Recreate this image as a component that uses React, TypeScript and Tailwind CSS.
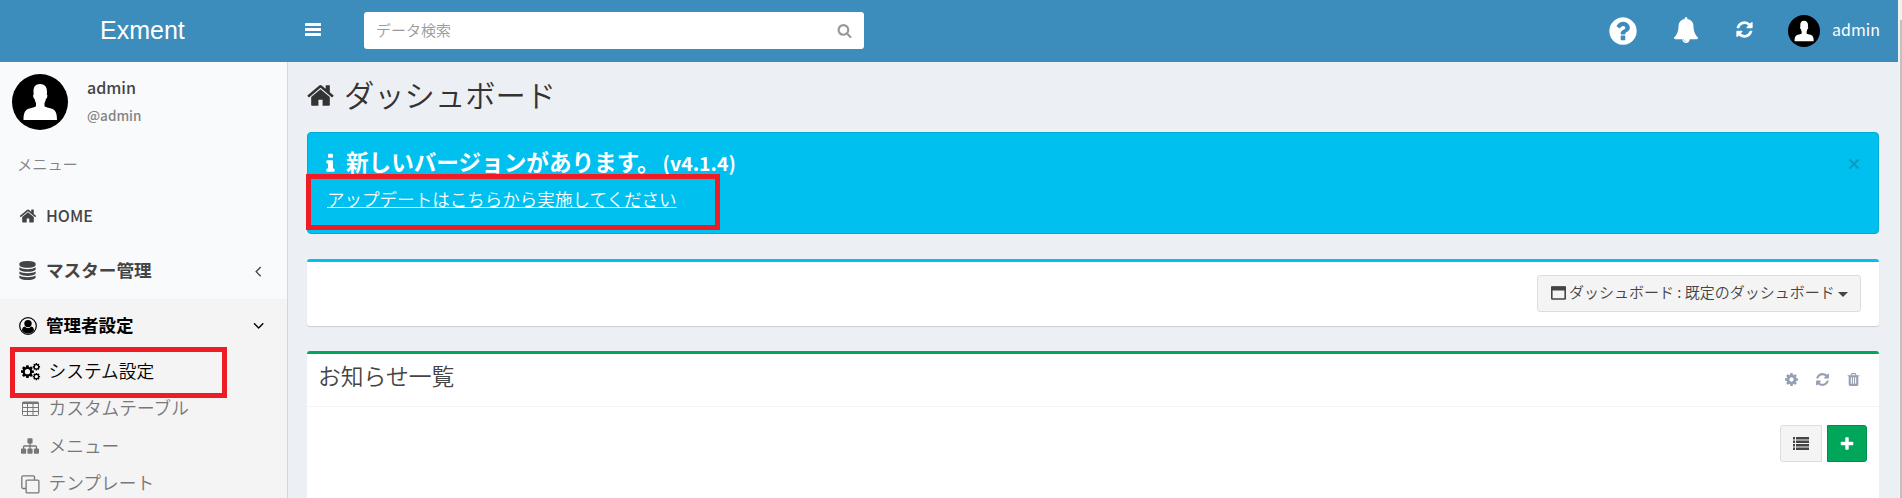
import React from "react";

const P = {
  home: "M1472 992v480q0 26-19 45t-45 19h-384v-384h-256v384h-384q-26 0-45-19t-19-45v-480q0-1 .5-3t.5-3l575-474 575 474q1 2 1 6zm223-69l-62 74q-8 9-21 11h-3q-13 0-21-7l-692-577-692 577q-12 8-24 7-13-2-21-11l-62-74q-8-10-7-23.5t11-21.5l719-599q32-26 76-26t76 26l244 204v-195q0-14 9-23t23-9h192q14 0 23 9t9 23v408l219 182q10 8 11 21.5t-7 23.5z",
  bell: "M912 1696q0-16-16-16-59 0-101.5-42.5t-42.5-101.5q0-16-16-16t-16 16q0 73 51.5 124.5t124.5 51.5q16 0 16-16zm816-288q0 52-38 90t-90 38h-448q0 106-75 181t-181 75-181-75-75-181h-448q-52 0-90-38t-38-90q50-42 91-88t85-119.5 74.5-158.5 50-206 19.5-260q0-152 117-282.5t307-158.5q-8-19-8-39 0-40 28-68t68-28 68 28 28 68q0 20-8 39 190 28 307 158.5t117 282.5q0 139 19.5 260t50 206 74.5 158.5 85 119.5 91 88z",
  question: "M1024 1376v-192q0-14-9-23t-23-9h-192q-14 0-23 9t-9 23v192q0 14 9 23t23 9h192q14 0 23-9t9-23zm256-672q0-88-55.5-163t-138.5-116-170-41q-243 0-371 213-15 24 8 42l132 100q7 6 19 6 16 0 25-12 53-68 86-92 34-24 86-24 48 0 85.5 26t37.5 59q0 38-20 61t-68 45q-63 28-115.5 86.5t-52.5 125.5v36q0 14 9 23t23 9h192q14 0 23-9t9-23q0-19 21.5-49.5t54.5-49.5q32-18 49-28.5t46-35 44.5-48 28-60.5 12.5-81zm384 192q0 209-103 385.5t-279.5 279.5-385.5 103-385.5-103-279.5-279.5-103-385.5 103-385.5 279.5-279.5 385.5-103 385.5 103 279.5 279.5 103 385.5z",
  refresh: "M1639 1056q0 5-1 7-64 268-268 434.5t-478 166.5q-146 0-282.5-55t-243.5-157l-129 129q-19 19-45 19t-45-19-19-45v-448q0-26 19-45t45-19h448q26 0 45 19t19 45-19 45l-137 137q71 66 161 102t187 36q134 0 250-65t186-179q11-17 53-117 8-23 30-23h192q13 0 22.5 9.5t9.5 22.5zm25-800v448q0 26-19 45t-45 19h-448q-26 0-45-19t-19-45 19-45l138-138q-148-137-349-137-134 0-250 65t-186 179q-11 17-53 117-8 23-30 23h-199q-13 0-22.5-9.5t-9.5-22.5v-7q65-268 270-434.5t480-166.5q146 0 284 55.5t245 156.5l130-129q19-19 45-19t45 19 19 45z",
  search: "M1216 832q0-185-131.5-316.5t-316.5-131.5-316.5 131.5-131.5 316.5 131.5 316.5 316.5 131.5 316.5-131.5 131.5-316.5zm512 832q0 52-38 90t-90 38q-54 0-90-38l-343-342q-179 124-399 124-143 0-273.5-55.5t-225-150-150-225-55.5-273.5 55.5-273.5 150-225 225-150 273.5-55.5 273.5 55.5 225 150 150 225 55.5 273.5q0 220-124 399l343 343q37 37 37 90z",
  cog: "M1152 896q0-106-75-181t-181-75-181 75-75 181 75 181 181 75 181-75 75-181zm512-109v222q0 12-8 23t-20 13l-185 28q-19 54-39 91 35 50 107 138 10 12 10 25t-9 23q-27 37-99 108t-94 71q-12 0-26-9l-138-108q-44 23-91 38-16 136-29 186-7 28-36 28h-222q-14 0-24.5-8.5t-11.5-21.5l-28-184q-49-16-90-37l-141 107q-10 9-25 9-14 0-25-11-126-114-165-168-7-10-7-23 0-12 8-23 15-21 51-66.5t54-70.5q-27-50-41-99l-183-27q-13-2-21-12.5t-8-23.5v-222q0-12 8-23t19-13l186-28q14-46 39-92-40-57-107-138-10-12-10-24 0-10 9-23 26-36 98.5-107.5t94.5-71.5q13 0 26 10l138 107q44-23 91-38 16-136 29-186 7-28 36-28h222q14 0 24.5 8.5t11.5 21.5l28 184q49 16 90 37l142-107q9-9 24-9 13 0 25 10 129 119 165 170 7 8 7 22 0 12-8 23-15 21-51 66.5t-54 70.5q26 50 41 98l183 28q13 2 21 12.5t8 23.5z",
  trash: "M704 1376v-704q0-14-9-23t-23-9h-64q-14 0-23 9t-9 23v704q0 14 9 23t23 9h64q14 0 23-9t9-23zm256 0v-704q0-14-9-23t-23-9h-64q-14 0-23 9t-9 23v704q0 14 9 23t23 9h64q14 0 23-9t9-23zm256 0v-704q0-14-9-23t-23-9h-64q-14 0-23 9t-9 23v704q0 14 9 23t23 9h64q14 0 23-9t9-23zm-544-992h448l-48-117q-7-9-17-11h-317q-10 2-17 11zm928 32v64q0 14-9 23t-23 9h-96v948q0 83-47 143.5t-113 60.5h-832q-66 0-113-58.5t-47-141.5v-952h-96q-14 0-23-9t-9-23v-64q0-14 9-23t23-9h309l70-167q15-37 54-63t79-26h320q40 0 79 26t54 63l70 167h309q14 0 23 9t9 23z",
  plus: "M1600 736v192q0 40-28 68t-68 28h-416v416q0 40-28 68t-68 28h-192q-40 0-68-28t-28-68v-416h-416q-40 0-68-28t-28-68v-192q0-40 28-68t68-28h416v-416q0-40 28-68t68-28h192q40 0 68 28t28 68v416h416q40 0 68 28t28 68z",
  database: "M896 768q237 0 443-43t325-127v170q0 69-103 128t-280 93.5-385 34.5-385-34.5-280-93.5-103-128v-170q119 84 325 127t443 43zm0 768q237 0 443-43t325-127v170q0 69-103 128t-280 93.5-385 34.5-385-34.5-280-93.5-103-128v-170q119 84 325 127t443 43zm0-384q237 0 443-43t325-127v170q0 69-103 128t-280 93.5-385 34.5-385-34.5-280-93.5-103-128v-170q119 84 325 127t443 43zm0-1152q208 0 385 34.5t280 93.5 103 128v128q0 69-103 128t-280 93.5-385 34.5-385-34.5-280-93.5-103-128v-128q0-69 103-128t280-93.5 385-34.5z",
  sitemap: "M1792 1248v320q0 40-28 68t-68 28h-320q-40 0-68-28t-28-68v-320q0-40 28-68t68-28h96v-192h-512v192h96q40 0 68 28t28 68v320q0 40-28 68t-68 28h-320q-40 0-68-28t-28-68v-320q0-40 28-68t68-28h96v-192h-512v192h96q40 0 68 28t28 68v320q0 40-28 68t-68 28h-320q-40 0-68-28t-28-68v-320q0-40 28-68t68-28h96v-192q0-52 38-90t90-38h512v-192h-96q-40 0-68-28t-28-68v-320q0-40 28-68t68-28h320q40 0 68 28t28 68v320q0 40-28 68t-68 28h-96v192h512q52 0 90 38t38 90v192h96q40 0 68 28t28 68z",
  info: "M1216 1344v128q0 26-19 45t-45 19h-512q-26 0-45-19t-19-45v-128q0-26 19-45t45-19h64v-384h-64q-26 0-45-19t-19-45v-128q0-26 19-45t45-19h384q26 0 45 19t19 45v576h64q26 0 45 19t19 45zm-128-1152v192q0 26-19 45t-45 19h-256q-26 0-45-19t-19-45v-192q0-26 19-45t45-19h256q26 0 45 19t19 45z",
  angle: "M1203 544q0 13-10 23l-393 393 393 393q10 10 10 23t-10 23l-50 50q-10 10-23 10t-23-10l-466-466q-10-10-10-23t10-23l466-466q10-10 23-10t23 10l50 50q10 10 10 23z",
};

function Fa({ d, className }: { d: string; className: string }) {
  return (
    <svg viewBox="0 0 1792 1792" fill="currentColor" className={"block shrink-0 " + className}>
      <path d={d} />
    </svg>
  );
}

function Avatar({ className }: { className: string }) {
  return (
    <svg viewBox="0 0 56 56" className={"block shrink-0 " + className}>
      <circle cx="28" cy="28" r="28" fill="#000" />
      <path
        fill="#fff"
        d="M28 10c4.600 0 7 2.800 7 7.500 0 1.200-.1 2.400-.2 3 .8.300.7 1.600.3 2.700-.3 1-.8 1.500-1.200 1.700-.3 1.700-.9 3.200-1.400 4.200v3.100c1.600 1.100 4 1.500 6.600 2.300 4.300 1.400 5.900 4 5.900 11.500H11.500c0-7.500 1.600-10.100 5.900-11.500 2.600-.8 5-1.200 6.600-2.300v-3.100c-.5-1-1.100-2.500-1.400-4.200-.4-.2-.9-.7-1.200-1.700-.4-1.100-.5-2.400.3-2.700-.1-.6-.2-1.800-.2-3C21.500 12.800 23.400 10 28 10z"
      />
    </svg>
  );
}

function MenuRow({ icon, label, dark }: { icon: React.ReactNode; label: string; dark?: boolean }) {
  return (
    <li className={"flex h-[37.500px] items-center pl-[21px] " + (dark ? "text-black" : "text-[#777]")}>
      <span className="flex w-[27.500px] shrink-0">{icon}</span>
      <span className="pb-[2px] text-[17.700px] font-[350] leading-none whitespace-nowrap">{label}</span>
    </li>
  );
}

export default function App() {
  return (
    <div className="relative flex h-[498px] w-[1902px] overflow-hidden bg-[#ecf0f5] font-['Noto_Sans_CJK_JP','Noto_Sans',sans-serif]">
      <div className="flex w-[1898px] flex-col">
        <header className="flex h-[62px] shrink-0 items-center bg-[#3c8dbc] text-white">
          <div className="w-[287px] shrink-0 pb-[1px] pl-[100px] font-['Liberation_Sans',Arial,sans-serif] text-[25px] leading-none">
            Exment
          </div>
          <svg viewBox="0 0 16 13" className="mb-[3px] ml-[18px] block h-[13px] w-[16px]" fill="currentColor">
            <rect width="16" height="3" rx=".6" />
            <rect y="5" width="16" height="3" rx=".6" />
            <rect y="10" width="16" height="3" rx=".6" />
          </svg>
          <div className="mb-[1px] ml-[43px] flex h-[37px] w-[500px] shrink-0 items-center justify-between rounded-[3px] bg-white pr-[12px] pl-[12px] text-[#999]">
            <span className="pb-[2px] text-[15px] leading-none font-[350]">データ検索</span>
            <Fa d={P.search} className="mb-[1px] h-[15px] w-[15px]" />
          </div>
          <div className="ml-auto flex items-center pr-[18px]">
            <Fa d={P.question} className="h-[32px] w-[32px]" />
            <Fa d={P.bell} className="mb-[2px] ml-[34px] h-[26px] w-[26px]" />
            <Fa d={P.refresh} className="mb-[3px] ml-[36px] h-[19px] w-[19px]" />
            <Avatar className="ml-[34px] h-[32px] w-[32px]" />
            <span className="ml-[12px] pb-[4px] text-[16px] leading-none">admin</span>
          </div>
        </header>

        <div className="flex min-h-0 flex-1">
          <aside className="flex w-[288px] shrink-0 flex-col border-r border-[#d2d6de] bg-[#f9fafc] text-[#444]">
            <div className="flex h-[76px] shrink-0 items-start pt-[12px] pl-[12px]">
              <Avatar className="h-[56px] w-[56px]" />
              <div className="ml-[19px] flex flex-col">
                <span className="mt-[3px] text-[16px] leading-[20px] font-medium">admin</span>
                <span className="mt-[9px] text-[13.500px] leading-[18px] font-medium text-[#848484]">@admin</span>
              </div>
            </div>
            <div className="flex h-[51px] shrink-0 items-center pl-[17px] text-[15.200px] leading-none font-[350] text-[#848484]">
              メニュー
            </div>
            <div className="flex h-[55px] shrink-0 items-center pb-[1px] pl-[19px]">
              <Fa d={P.home} className="h-[18px] w-[18px]" />
              <span className="ml-[9px] pb-[3px] text-[16px] leading-none font-medium">HOME</span>
            </div>
            <div className="flex h-[55px] shrink-0 items-center pr-[20px] pb-[2px] pl-[18px]">
              <Fa d={P.database} className="h-[19px] w-[19px]" />
              <span className="ml-[9px] pb-[2px] text-[17.600px] leading-none font-bold">マスター管理</span>
              <Fa d={P.angle} className="ml-auto h-[18px] w-[18px]" />
            </div>
            <div className="flex min-h-0 flex-1 flex-col bg-[#f4f4f5]">
              <div className="flex h-[54px] shrink-0 items-center pr-[20px] pl-[19px] text-black">
                <svg viewBox="0 0 18 18" className="block h-[18px] w-[18px]">
                  <circle cx="9" cy="9" r="8.300" fill="none" stroke="currentColor" strokeWidth="1.200" />
                  <circle cx="9" cy="6.600" r="3.700" fill="currentColor" />
                  <path d="M5.600 9.600c-1.700.4-2.500 1.800-2.600 4C4.500 15.400 6.500 16.500 9 16.500s4.500-1.100 6-2.900c-.1-2.200-.9-3.600-2.600-4-.8.9-2 1.500-3.400 1.500s-2.600-.6-3.400-1.500z" fill="currentColor" />
                </svg>
                <span className="ml-[9px] pb-[2px] text-[17.500px] leading-none font-bold">管理者設定</span>
                <Fa d={P.angle} className="ml-auto h-[18px] w-[18px] -rotate-90" />
              </div>
              <ul className="flex flex-col">
                <MenuRow
                  dark
                  label="システム設定"
                  icon={
                    <svg viewBox="0 0 20 18" className="block h-[18px] w-[20px]" fill="currentColor">
                      <path fillRule="evenodd" d={P.cog} transform="translate(-1.100 1.100) scale(.0084)" />
                      <circle cx="6.430" cy="8.630" r="2.600" fill="#f4f4f5" />
                      <path d={P.cog} transform="translate(11.100 -.5) scale(.0048)" />
                      <path d={P.cog} transform="translate(11.100 9.300) scale(.0048)" />
                      <circle cx="15.400" cy="3.800" r="1.600" fill="#f4f4f5" />
                      <circle cx="15.400" cy="13.600" r="1.600" fill="#f4f4f5" />
                    </svg>
                  }
                />
                <MenuRow
                  label="カスタムテーブル"
                  icon={
                    <svg viewBox="0 0 18 16" className="block h-[16px] w-[18px]" fill="none" stroke="currentColor">
                      <rect x="1.500" y="1" width="16" height="13.500" rx="1" />
                      <path d="M1.500 2h16" strokeWidth="2" />
                      <path d="M1.500 6.500h16M1.500 10.500h16M6.500 2v12M12 2v12" />
                    </svg>
                  }
                />
                <MenuRow label="メニュー" icon={<Fa d={P.sitemap} className="mb-[1px] h-[18px] w-[18px]" />} />
                <MenuRow
                  label="テンプレート"
                  icon={
                    <svg viewBox="0 0 19 19" className="block h-[19px] w-[19px]" fill="none" stroke="currentColor" strokeWidth="1.300">
                      <rect x="5.100" y="5.100" width="12.800" height="12.800" rx="1" />
                      <path d="M5 13.500H2a1.200 1.200 0 0 1-1.200-1.200V2A1.200 1.200 0 0 1 2 .8h10.300A1.200 1.200 0 0 1 13.500 2v3" />
                    </svg>
                  }
                />
              </ul>
            </div>
          </aside>

          <main className="flex flex-1 flex-col pr-[19px] pl-[19px]">
            <h1 className="flex h-[70px] shrink-0 items-center pb-[3px] text-[#333]">
              <Fa d={P.home} className="-ml-[1px] h-[29px] w-[29px]" />
              <span className="ml-[9px] pb-[2px] text-[30.300px] leading-none font-[350]">ダッシュボード</span>
            </h1>
            <section className="flex h-[102px] shrink-0 justify-between rounded-[4px] border border-[#00acd6] bg-[#00c0ef] pl-[19px] text-white">
              <div>
                <div className="mt-[17px] flex h-[24px] items-center">
                  <Fa d={P.info} className="-ml-[8px] mt-[3px] h-[23px] w-[23px]" />
                  <span className="ml-[4px] text-[22.600px] leading-none font-bold whitespace-nowrap">新しいバージョンがあります。</span>
                  <span className="ml-[3px] pt-[1px] text-[19.500px] leading-none font-bold">(v4.1.4)</span>
                </div>
                <a className="mt-[15px] block text-[17.550px] leading-[20px] font-[350] underline underline-offset-1">
                  アップデートはこちらから実施してください
                </a>
              </div>
              <svg viewBox="0 0 12 12" className="mt-[25px] mr-[18px] block h-[12px] w-[12px]" stroke="#0a9ac0" strokeWidth="2">
                <path d="M1.500 1.500l9 9M10.500 1.500l-9 9" />
              </svg>
            </section>
            <section className="mt-[25px] flex h-[67px] shrink-0 items-center justify-end rounded-[3px] border-t-[3px] border-[#00c0ef] bg-white pr-[18px] pb-[2px] shadow-[0_1px_1px_rgba(0,0,0,0.15)]">
              <button className="flex h-[37px] w-[324px] items-center rounded-[3px] border border-[#ddd] bg-[#f4f4f4] pl-[13px] text-[#444]">
                <svg viewBox="0 0 15 14" className="mb-[1px] block h-[14px] w-[15px]" fill="none" stroke="currentColor">
                  <rect x=".8" y="1" width="13.400" height="12" rx=".5" strokeWidth="1.600" />
                  <path d="M0 2.500h15" strokeWidth="4" />
                </svg>
                <span className="ml-[3px] pb-[3px] text-[15px] leading-none font-[350] whitespace-nowrap">ダッシュボード : 既定のダッシュボード</span>
                <svg viewBox="0 0 10 5" className="mt-[2px] ml-[3px] block h-[5px] w-[10px]" fill="currentColor">
                  <path d="M0 0h10L5 5z" />
                </svg>
              </button>
            </section>
            <section className="mt-[25px] flex flex-1 flex-col rounded-t-[3px] border-t-[3px] border-[#00a65a] bg-white">
              <div className="flex h-[53px] shrink-0 items-center border-b border-[#f4f4f4] pr-[18px] pl-[11px]">
                <h3 className="pb-[7px] text-[22.800px] leading-none font-[350] text-[#444]">お知らせ一覧</h3>
                <div className="ml-auto flex items-center gap-[16px] pb-[2px] text-[#97a0b3]">
                  <Fa d={P.cog} className="h-[15px] w-[15px]" />
                  <Fa d={P.refresh} className="h-[15px] w-[15px]" />
                  <Fa d={P.trash} className="h-[15px] w-[15px]" />
                </div>
              </div>
              <div className="flex justify-end gap-[5px] pt-[18px] pr-[12px]">
                <button className="flex h-[37px] w-[42px] items-center justify-center rounded-l-[3px] border border-[#ddd] bg-[#f4f4f4] text-[#444]">
                  <svg viewBox="0 0 16 13" className="block h-[13px] w-[16px]" fill="currentColor">
                    <path d="M0 0h2v2.500H0zM3 0h13v2.500H3zM0 3.500h2V6H0zM3 3.500h13V6H3zM0 7h2v2.500H0zM3 7h13v2.500H3zM0 10.500h2v2.500H0zM3 10.500h13v2.500H3z" />
                  </svg>
                </button>
                <button className="flex h-[37px] w-[40px] items-center justify-center rounded-r-[3px] border border-[#008d4c] bg-[#00a65a] text-white">
                  <Fa d={P.plus} className="h-[16px] w-[16px]" />
                </button>
              </div>
            </section>
          </main>
        </div>
      </div>

      <div className="flex w-[4px] flex-col bg-[#f1f1f1] pt-[20px] pl-[2px]">
        <div className="flex-1 bg-[#c1c1c1]" />
      </div>

      <div className="absolute top-[174px] left-[306px] h-[56px] w-[414px] border-[5px] border-[#ee1c25]" />
      <div className="absolute top-[347px] left-[10px] h-[51px] w-[217px] border-[5px] border-[#ee1c25]" />
    </div>
  );
}
